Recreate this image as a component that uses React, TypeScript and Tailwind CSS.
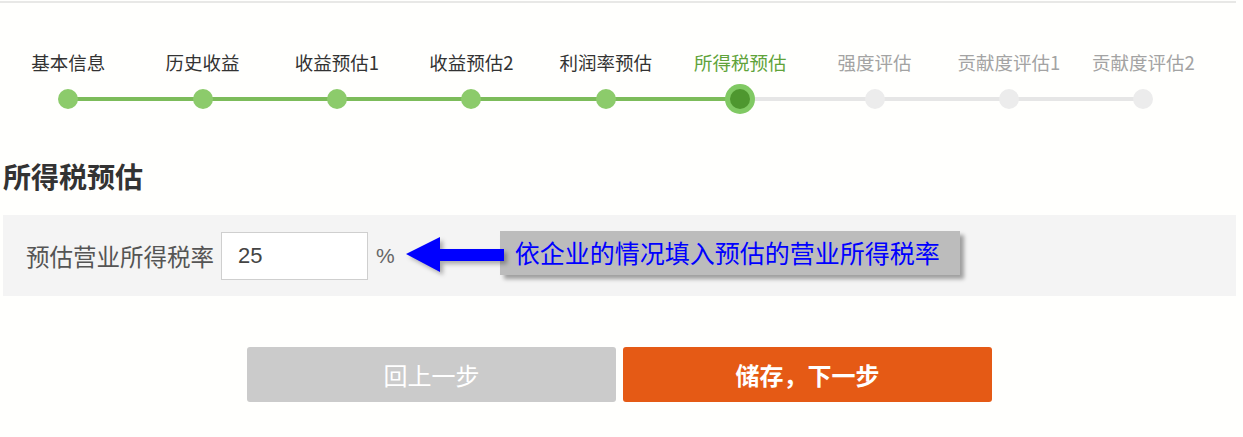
const steps = ['基本信息', '历史收益', '收益预估1', '收益预估2', '利润率预估', '所得税预估', '强度评估', '贡献度评估1', '贡献度评估2'];
const active = 5;

function Stepper() {
  return (
    <div className="ml-[1px] mt-[49px] flex">
      {steps.map((label, i) => {
        const leftGreen = i <= active;
        const rightGreen = i < active;
        return (
          <div key={label} className="flex w-[134.4px] flex-col items-center">
            <div
              className={
                'whitespace-nowrap text-[18.5px] leading-[20px] ' +
                (i < active ? 'text-[#333]' : i === active ? 'text-[#5fa33a]' : 'text-[#a3a3a3]')
              }
            >
              {label}
            </div>
            <div className="relative mt-[12px] flex h-[30px] w-full items-center justify-center">
              {i > 0 && (
                <div className={'absolute left-0 top-[13px] h-[4px] w-1/2 ' + (leftGreen ? 'bg-[#7cbc5a]' : 'bg-[#e6e6e6]')} />
              )}
              {i < steps.length - 1 && (
                <div className={'absolute right-0 top-[13px] h-[4px] w-1/2 ' + (rightGreen ? 'bg-[#7cbc5a]' : 'bg-[#e6e6e6]')} />
              )}
              {i === active ? (
                <div className="relative flex h-[30px] w-[30px] items-center justify-center rounded-full bg-[#80c963]">
                  <div className="h-[20px] w-[20px] rounded-full bg-[#4e972f]" />
                </div>
              ) : (
                <div className={'relative h-[20px] w-[20px] rounded-full ' + (i < active ? 'bg-[#8ccb6b]' : 'bg-[#ececec]')} />
              )}
            </div>
          </div>
        );
      })}
    </div>
  );
}

function Arrow() {
  return (
    <svg width="100" height="44" viewBox="0 0 100 44" className="ml-[9px] shrink-0" style={{ filter: 'drop-shadow(3px 3px 2px rgba(0,0,0,0.3))' }}>
      <polygon points="2,20 36,3 36,15 100,15 100,27 36,27 36,38" fill="#0000ff" />
    </svg>
  );
}

export default function App() {
  return (
    <div className="h-[437px] w-[1243px] overflow-hidden bg-[#fffffd] font-['Noto_Sans_CJK_SC','Noto_Sans',sans-serif]">
      <div className="mt-[1px] h-[2px] w-[1236px] bg-[#e8e8e6]" />
      <Stepper />

      <h2 className="ml-[3px] mt-[44px] text-[28px] font-bold leading-[36px] text-[#333]">所得税预估</h2>

      <div className="ml-[3px] mt-[21px] flex h-[81px] w-[1233px] items-center bg-[#f4f4f4] pl-[23px]">
        <span className="text-[23.5px] leading-[30px] text-[#555]">预估营业所得税率</span>
        <div className="ml-[7px] flex h-[48px] w-[147px] items-center border border-[#cfcfcf] bg-white pl-[16px] font-['Liberation_Sans',sans-serif] text-[22px] text-[#444]">
          25
        </div>
        <span className="ml-[8px] font-['Liberation_Sans',sans-serif] text-[21px] text-[#666]">%</span>
        <Arrow />
        <div className="-ml-[4px] mb-[6px] flex h-[44px] w-[460px] items-center bg-[#bcbcbc] pl-[15px] text-[25px] text-[#0000ff] shadow-[4px_4px_4px_rgba(0,0,0,0.35)]">
          依企业的情况填入预估的营业所得税率
        </div>
      </div>

      <div className="ml-[247px] mt-[51px] flex gap-[7px]">
        <button className="h-[55px] w-[369px] rounded-[3px] bg-[#cbcbcb] text-[24px] text-white">回上一步</button>
        <button className="h-[55px] w-[369px] rounded-[3px] bg-[#e55a15] text-[24px] font-bold text-white">储存，下一步</button>
      </div>
    </div>
  );
}
